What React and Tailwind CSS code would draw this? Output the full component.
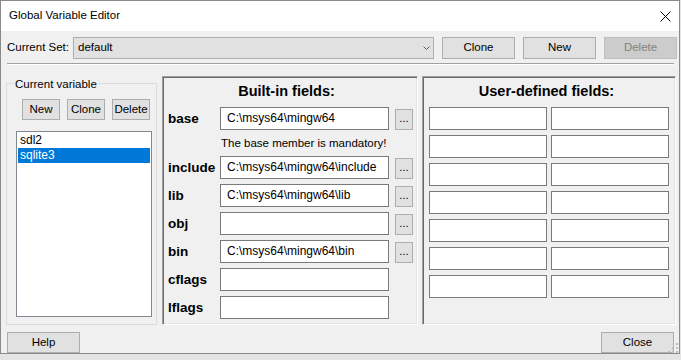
const btn = "flex items-center justify-center border border-[#adadad] bg-[#e1e1e1] text-[11.5px] leading-none text-black";
const input = "h-[23px] border border-[#7a7a7a] bg-white pl-[6px] text-[12px] leading-[21px] whitespace-nowrap overflow-hidden";
const panel = "h-[249px] border border-t-[#a0a0a0] border-l-[#a0a0a0] border-r-white border-b-white shadow-[inset_1px_1px_0_#696969,inset_-1px_-1px_0_#e3e3e3] pt-[4px]";

function Row({ label, value, browse, className }) {
  return (
    <div className={"flex items-start " + (className || "")}>
      <div className="w-[52px] font-bold text-[13.5px] leading-[23px]">{label}</div>
      <div className={input + " w-[169px]"}>{value}</div>
      {browse && (
        <div className={btn + " ml-[6px] mt-[2px] w-[18px] h-[21px] !items-end pb-[5px]"}>...</div>
      )}
    </div>
  );
}

export default function App() {
  return (
    <div className="w-[681px] h-[360px] bg-[#e4e4e4] font-['Liberation_Sans',Arial,sans-serif] text-[11.5px] text-black overflow-hidden">
      <div className="relative w-[680px] h-[354px] border border-[#8a8a8a] bg-[#f0f0f0] flex flex-col">
        {/* Title bar */}
        <div className="h-[30px] shrink-0 bg-white flex items-center justify-between pl-[8px] pr-[8px]">
          <span className="text-[11.5px]">Global Variable Editor</span>
          <svg width="11" height="11" viewBox="0 0 11 11">
            <path d="M0.5 0.5 L10.5 10.5 M10.5 0.5 L0.5 10.5" stroke="#000" strokeWidth="1" fill="none" />
          </svg>
        </div>

        {/* Current set row */}
        <div className="flex items-center pt-[6px] pl-[6px] shrink-0">
          <div className="w-[66px]">Current Set:</div>
          <div className="w-[361px] h-[22px] border border-[#adadad] bg-[#e1e1e1] flex items-center justify-between pl-[4px] pr-[3px]">
            <span>default</span>
            <svg width="7" height="4" viewBox="0 0 7 4">
              <polyline points="0.5,0.5 3.5,3.5 6.5,0.5" stroke="#606060" strokeWidth="1" fill="none" />
            </svg>
          </div>
          <div className={btn + " ml-[8px] w-[73px] h-[22px]"}>Clone</div>
          <div className={btn + " ml-[8px] w-[73px] h-[22px]"}>New</div>
          <div className="ml-[8px] w-[73px] h-[22px] flex items-center justify-center border border-[#bfbfbf] bg-[#cccccc] text-[#838383]">Delete</div>
        </div>

        {/* Separator */}
        <div className="mt-[4px] ml-[6px] w-[667px] h-[2px] shrink-0 border-t border-t-[#a0a0a0] bg-white" />

        {/* Main */}
        <div className="flex mt-[11px] h-[249px] pl-[5px] shrink-0">
          {/* Group box */}
          <div className="relative w-[151px] h-full">
            <div className="mt-[7px] h-[242px] border border-[#dcdcdc]">
              <div className="flex gap-[7px] pt-[15px] pl-[15px]">
                <div className={btn + " w-[38px] h-[21px]"}>New</div>
                <div className={btn + " w-[38px] h-[21px]"}>Clone</div>
                <div className={btn + " w-[38px] h-[21px]"}>Delete</div>
              </div>
              <div className="mt-[11px] ml-[9px] w-[136px] h-[186px] border border-[#828790] bg-white p-[1px] text-[12px]">
                <div className="h-[15px] leading-[15px] pl-[2px]">sdl2</div>
                <div className="h-[15px] leading-[15px] pl-[2px] bg-[#0078d7] text-white">sqlite3</div>
              </div>
            </div>
            <span className="absolute left-[8px] top-[1px] bg-[#f0f0f0] px-[1px] leading-[14px]">Current variable</span>
          </div>

          {/* Built-in fields */}
          <div className={panel + " ml-[5px] w-[256px] pl-[5px]"}>
            <div className="w-[237px] h-[20px] leading-[20px] text-center font-bold text-[14.5px]">Built-in fields:</div>
            <Row className="mt-[6px]" label="base" value="C:\msys64\mingw64" browse />
            <div className="mt-[6px] h-[14px] leading-[14px] pl-[53px]">The base member is mandatory!</div>
            <Row className="mt-[6px]" label="include" value="C:\msys64\mingw64\include" browse />
            <Row className="mt-[5px]" label="lib" value="C:\msys64\mingw64\lib" browse />
            <Row className="mt-[5px]" label="obj" value="" browse />
            <Row className="mt-[5px]" label="bin" value="C:\msys64\mingw64\bin" browse />
            <Row className="mt-[5px]" label="cflags" value="" />
            <Row className="mt-[5px]" label="lflags" value="" />
          </div>

          {/* User-defined fields */}
          <div className={panel + " ml-[4px] w-[254px] pl-[6px]"}>
            <div className="w-[235px] h-[20px] leading-[20px] text-center font-bold text-[14.5px]">User-defined fields:</div>
            <div className="mt-[6px] grid grid-cols-[118px_118px] gap-x-[4px] gap-y-[5px]">
              {Array.from({ length: 14 }).map((_, i) => (
                <div key={i} className="h-[23px] border border-[#7a7a7a] bg-white" />
              ))}
            </div>
          </div>
        </div>

        {/* Bottom buttons */}
        <div className="flex justify-between mt-[7px] pl-[6px] pr-[5px] shrink-0">
          <div className={btn + " w-[73px] h-[21px]"}>Help</div>
          <div className={btn + " w-[73px] h-[21px]"}>Close</div>
        </div>

        {/* Resize grip */}
        <svg className="absolute right-[1px] bottom-[0px]" width="10" height="10" viewBox="0 0 10 10">
          <rect x="8" y="0" width="2" height="2" fill="#bcbcbc" />
          <rect x="4" y="4" width="2" height="2" fill="#bcbcbc" />
          <rect x="8" y="4" width="2" height="2" fill="#bcbcbc" />
          <rect x="0" y="8" width="2" height="2" fill="#bcbcbc" />
          <rect x="4" y="8" width="2" height="2" fill="#bcbcbc" />
          <rect x="8" y="8" width="2" height="2" fill="#bcbcbc" />
        </svg>
      </div>
    </div>
  );
}
